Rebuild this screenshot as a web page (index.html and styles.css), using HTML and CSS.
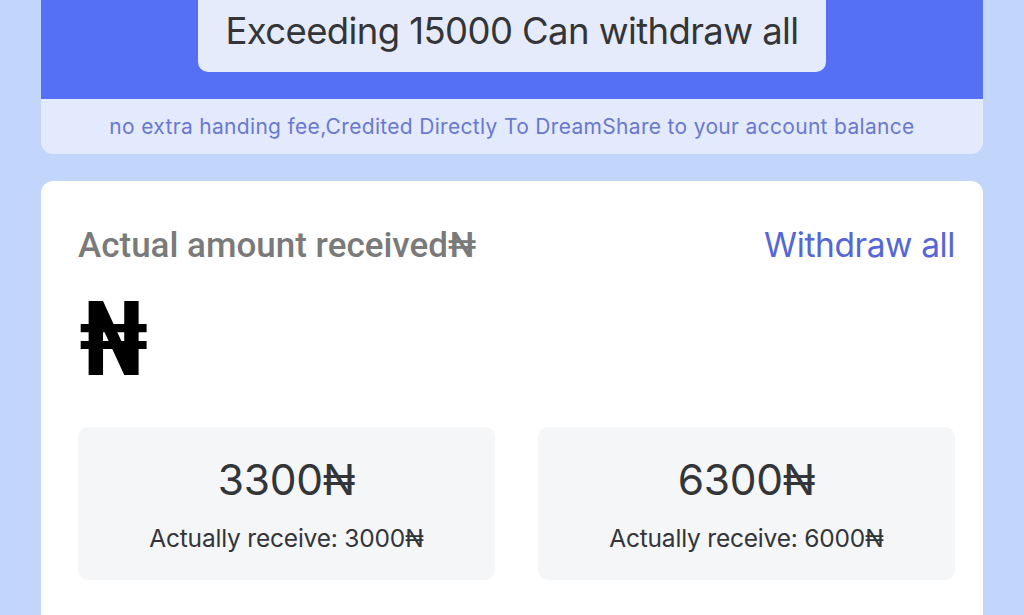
FILE: index.html
```html
<!DOCTYPE html>
<html lang="en">
<head>
<meta charset="utf-8">
<title>Withdraw</title>
<link rel="stylesheet" href="styles.css">
</head>
<body>
<div class="page">
  <section class="notice">
    <div class="notice-top">
      <div class="notice-box">Exceeding 15000 Can withdraw all</div>
    </div>
    <div class="notice-foot">no extra handing fee,Credited Directly To DreamShare to your account balance</div>
  </section>
  <section class="card">
    <div class="card-head">
      <div class="label">Actual amount received₦</div>
      <div class="link">Withdraw all</div>
    </div>
    <div class="big">₦</div>
    <div class="options">
      <div class="option">
        <div class="amount">3300₦</div>
        <div class="receive">Actually receive: 3000₦</div>
      </div>
      <div class="option">
        <div class="amount">6300₦</div>
        <div class="receive">Actually receive: 6000₦</div>
      </div>
    </div>
  </section>
</div>
</body>
</html>
```
FILE: styles.css
```css
html, body {
  margin: 0;
  padding: 0;
  background: #c2d5fa;
  height: 100%;
  overflow: hidden;
}
.page {
  padding: 0 41px;
  display: flex;
  flex-direction: column;
  gap: 27px;
  font-family: Inter, "Noto Sans", sans-serif;
}
.notice {
  border-radius: 0 0 12px 12px;
  overflow: hidden;
  background: #e4eafd;
}
.notice-top {
  background: #5670f5;
  height: 99px;
  display: flex;
  justify-content: center;
}
.notice-box {
  width: 628px;
  height: 72px;
  box-sizing: border-box;
  background: #e6ebfc;
  border-radius: 0 0 10px 10px;
  display: flex;
  align-items: center;
  justify-content: center;
  font-size: 36.5px;
  color: #333538;
  letter-spacing: -0.6px;
  padding-bottom: 10px;
}
.notice-foot {
  height: 55px;
  display: flex;
  align-items: center;
  justify-content: center;
  font-size: 21px;
  color: #6a78cf;
  letter-spacing: 0.32px;
}
.card {
  background: #fff;
  border-radius: 12px;
  padding: 44px 28px 40px 37px;
  height: 500px;
}
.card-head {
  display: flex;
  justify-content: space-between;
  align-items: baseline;
}
.label {
  font-family: Roboto, sans-serif;
  font-weight: 500;
  font-size: 35px;
  color: #7a7a7a;
}
.link {
  font-size: 33.5px;
  color: #5566d6;
  letter-spacing: -0.4px;
}
.big {
  font-family: Roboto, sans-serif;
  font-weight: 900;
  font-size: 104px;
  line-height: 1;
  color: #000;
  margin-top: 22px;
  margin-left: 1px;
  transform: scaleX(0.81);
  transform-origin: left center;
}
.options {
  display: grid;
  grid-template-columns: 1fr 1fr;
  gap: 43px;
  margin-top: 35px;
}
.option {
  background: #f5f6f8;
  border-radius: 10px;
  height: 153px;
  display: flex;
  flex-direction: column;
  align-items: center;
  justify-content: center;
  color: #333538;
}
.amount {
  font-size: 42.5px;
  letter-spacing: -0.3px;
}
.receive {
  font-size: 24.5px;
  letter-spacing: -0.2px;
  margin-top: 18px;
}
```
